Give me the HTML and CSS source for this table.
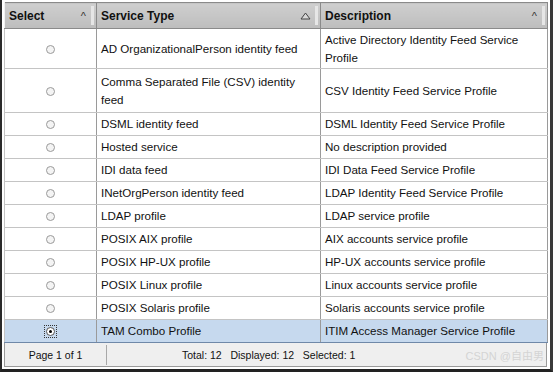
FILE: index.html
```html
<!DOCTYPE html>
<html>
<head>
<meta charset="utf-8">
<link rel="stylesheet" href="styles.css">
</head>
<body>
<div class="frame">
  <table class="grid">
    <colgroup>
      <col class="c-select">
      <col class="c-type">
      <col class="c-desc">
    </colgroup>
    <thead>
      <tr>
        <th><div class="hcell"><span>Select</span><span class="caret">^</span></div></th>
        <th><div class="hcell"><span>Service Type</span><span class="tri"><svg width="11" height="8" viewBox="0 0 11 8"><path d="M1 7 L5.5 1 L10 7 Z" fill="#d8d8d8" stroke="#444" stroke-width="1"/></svg></span></div></th>
        <th><div class="hcell"><span>Description</span><span class="caret">^</span></div></th>
      </tr>
    </thead>
    <tbody>
      <tr class="tall1"><td class="sel"><span class="radio"></span></td><td>AD OrganizationalPerson identity feed</td><td>Active Directory Identity Feed Service Profile</td></tr>
      <tr class="tall2"><td class="sel"><span class="radio"></span></td><td>Comma Separated File (CSV) identity feed</td><td>CSV Identity Feed Service Profile</td></tr>
      <tr><td class="sel"><span class="radio"></span></td><td>DSML identity feed</td><td>DSML Identity Feed Service Profile</td></tr>
      <tr><td class="sel"><span class="radio"></span></td><td>Hosted service</td><td>No description provided</td></tr>
      <tr><td class="sel"><span class="radio"></span></td><td>IDI data feed</td><td>IDI Data Feed Service Profile</td></tr>
      <tr><td class="sel"><span class="radio"></span></td><td>INetOrgPerson identity feed</td><td>LDAP Identity Feed Service Profile</td></tr>
      <tr><td class="sel"><span class="radio"></span></td><td>LDAP profile</td><td>LDAP service profile</td></tr>
      <tr><td class="sel"><span class="radio"></span></td><td>POSIX AIX profile</td><td>AIX accounts service profile</td></tr>
      <tr><td class="sel"><span class="radio"></span></td><td>POSIX HP-UX profile</td><td>HP-UX accounts service profile</td></tr>
      <tr><td class="sel"><span class="radio"></span></td><td>POSIX Linux profile</td><td>Linux accounts service profile</td></tr>
      <tr><td class="sel"><span class="radio"></span></td><td>POSIX Solaris profile</td><td>Solaris accounts service profile</td></tr>
      <tr class="selected"><td class="sel"><span class="focus"><span class="radio on"></span></span></td><td>TAM Combo Profile</td><td>ITIM Access Manager Service Profile</td></tr>
    </tbody>
  </table>
  <div class="footer">
    <div class="pager">Page 1 of 1</div>
    <div class="counts">Total: 12&nbsp;&nbsp; Displayed: 12&nbsp;&nbsp; Selected: 1</div>
    <div class="mark">CSDN @自由男</div>
  </div>
</div>
</body>
</html>
```

FILE: styles.css
```css
html, body {
  margin: 0;
  padding: 0;
  background: #fff;
}
body {
  font-family: "Liberation Sans", Arial, "Noto Sans CJK SC", sans-serif;
  font-size: 11.6px;
  color: #111;
}
.frame {
  width: 553px;
  height: 372px;
  box-sizing: border-box;
  border-left: 2px solid #2a2a2a;
  border-right: 3px solid #3a3a3a;
  border-bottom: 3px solid #222;
  padding: 2px 3px 0 2px;
  overflow: hidden;
}
.grid {
  width: 543px;
  border-collapse: collapse;
  table-layout: fixed;
  border: 1px solid #8a8a8a;
}
.c-select { width: 92px; }
.c-type { width: 224px; }
.c-desc { width: 227px; }
th {
  background: linear-gradient(#cfcfcf, #bdbdbd);
  height: 25px;
  padding: 0;
  text-align: left;
  font-weight: bold;
  font-size: 12px;
  border-left: 1px solid #f2f2f2;
  border-right: 1px solid #8a8a8a;
  border-bottom: 1px solid #8a8a8a;
}
.hcell {
  display: flex;
  align-items: center;
  justify-content: space-between;
  height: 25px;
  padding-left: 4px;
  padding-right: 2px;
  box-sizing: border-box;
}
.caret {
  font-weight: normal;
  font-size: 11px;
  color: #333;
  height: 19px;
  line-height: 21px;
  padding-right: 5px;
  border-right: 3px solid #e6e6e6;
}
.tri {
  height: 19px;
  display: flex;
  align-items: center;
  padding-right: 4px;
  border-right: 3px solid #e6e6e6;
}
td {
  height: 22px;
  padding: 0 4px;
  border: 1px solid #c4c4c4;
  border-right-color: #9a9a9a;
  line-height: 18px;
  vertical-align: middle;
}
tr.tall1 td { height: 39px; }
tr.tall2 td { height: 43px; }
td.sel {
  text-align: center;
  padding: 0;
}
.radio {
  display: inline-block;
  width: 7px;
  height: 7px;
  border-radius: 50%;
  border: 1px solid #9a9a9a;
  background: #f4f4f4;
  vertical-align: middle;
  position: relative;
}
.radio.on {
  border-color: #555;
  background: #fff;
}
.radio.on::after {
  content: "";
  position: absolute;
  left: 2px;
  top: 2px;
  width: 3px;
  height: 3px;
  border-radius: 50%;
  background: #000;
}
.focus {
  display: inline-block;
  border: 1px dotted #333;
  padding: 1px 1px;
  line-height: 0;
}
tr.selected td {
  background: #c6d9ee;
  border-top: 1px solid #8ea8c6;
  border-bottom: 1px solid #6f88a8;
}
.footer {
  display: flex;
  align-items: center;
  height: 24px;
  width: 543px;
  box-sizing: border-box;
  background: #efefef;
  border: 1px solid #9a9a9a;
  border-top: none;
  position: relative;
  font-size: 10.5px;
}
.pager {
  width: 101px;
  text-align: center;
  border-right: 1px solid #a8a8a8;
  height: 20px;
  line-height: 20px;
}
.counts {
  padding-left: 75px;
}
.mark {
  position: absolute;
  right: 2px;
  bottom: 3px;
  font-size: 11px;
  color: #d4d4d4;
}
```
